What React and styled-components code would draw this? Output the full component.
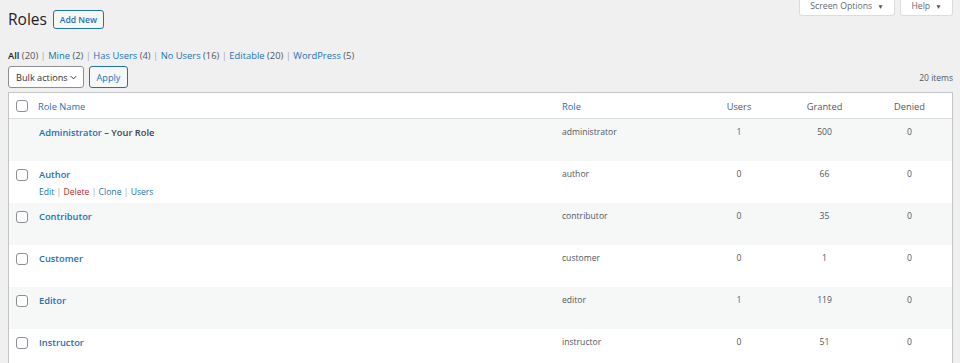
import React from "react";
import styled, { createGlobalStyle } from "styled-components";

const Global = createGlobalStyle`
  html, body { margin: 0; padding: 0; background: #f0f0f1; }
  body { font-family: "Open Sans", "Noto Sans", sans-serif; color: #3c434a; }
  * { box-sizing: border-box; }
`;

const Wrap = styled.div`
  padding: 0 7px 0 8px;
`;

const TopBar = styled.div`
  display: flex;
  justify-content: space-between;
  align-items: flex-start;
`;

const TitleGroup = styled.div`
  display: flex;
  align-items: center;
  gap: 6px;
  padding-top: 10px;
`;

const Title = styled.h1`
  margin: 0;
  font-size: 15.5px;
  font-weight: 400;
  line-height: 19px;
  color: #1d2327;
`;

const OutlineButton = styled.button`
  font-family: inherit;
  font-size: ${(p) => p.$size || 8.6}px;
  font-weight: ${(p) => p.$weight || 400};
  color: #2271b1;
  background: #f6f7f7;
  border: 1px solid #2271b1;
  border-radius: 3px;
  height: ${(p) => p.$h || 19}px;
  width: ${(p) => p.$w}px;
  padding: 0;
  display: flex;
  align-items: center;
  justify-content: center;
  cursor: pointer;
`;

const Tabs = styled.div`
  display: flex;
  gap: 5px;
`;

const Tab = styled.div`
  width: ${(p) => p.$w}px;
  height: 16px;
  background: #fff;
  border: 1px solid #dcdcde;
  border-top: none;
  border-radius: 0 0 3px 3px;
  display: flex;
  align-items: center;
  justify-content: center;
  gap: 5px;
  font-size: 8.7px;
  color: #646970;
  padding-bottom: 3px;
`;

const Caret = styled.span`
  font-size: 6.5px;
  color: #50575e;
`;

const Filters = styled.ul`
  list-style: none;
  margin: 0;
  padding: 0;
  margin-top: 20px;
  display: flex;
  font-size: 9.4px;
  line-height: 13px;
  color: #50575e;
`;

const FilterItem = styled.li`
  white-space: pre;
`;

const FilterLink = styled.a`
  color: ${(p) => (p.$current ? "#1d2327" : "#2271b1")};
  font-weight: ${(p) => (p.$current ? 600 : 400)};
  text-decoration: none;
`;

const Count = styled.span`
  color: #50575e;
`;

const Sep = styled.span`
  color: #a7aaad;
`;

const TableNav = styled.div`
  display: flex;
  justify-content: space-between;
  align-items: center;
  margin-top: 4px;
  height: 22px;
`;

const NavLeft = styled.div`
  display: flex;
  gap: 5px;
  align-items: center;
`;

const Select = styled.div`
  width: 76px;
  height: 22px;
  background: #fff;
  border: 1px solid #8c8f94;
  border-radius: 3px;
  display: flex;
  align-items: center;
  justify-content: space-between;
  padding: 0 5px 0 7px;
  font-size: 9.2px;
  color: #2c3338;
`;

const ItemsCount = styled.div`
  font-size: 8.5px;
  color: #50575e;
`;

const Table = styled.div`
  margin-top: 4px;
  background: #fff;
  border: 1px solid #c3c4c7;
  box-shadow: 0 1px 1px rgba(0, 0, 0, 0.04);
`;

const Row = styled.div`
  display: grid;
  grid-template-columns: 20px 1fr 144px 86px 85px 85px;
  height: ${(p) => (p.$head ? 26 : 42)}px;
  background: ${(p) => (p.$alt ? "#f6f7f7" : "#fff")};
  border-bottom: ${(p) => (p.$head ? "1px solid #dcdcde" : "none")};
`;

const Cell = styled.div`
  padding-top: 7px;
  padding-left: ${(p) => p.$pl || 0}px;
  text-align: ${(p) => (p.$center ? "center" : "left")};
  font-size: ${(p) => (p.$head ? 9.3 : 8.6)}px;
  line-height: 13px;
  color: ${(p) => (p.$link ? "#2271b1" : "#50575e")};
  white-space: nowrap;
`;

const CheckCell = styled.div`
  padding-top: ${(p) => (p.$head ? 7 : 8)}px;
  padding-left: 7px;
`;

const Checkbox = styled.span`
  display: block;
  width: 12px;
  height: 12px;
  border: 1px solid #8c8f94;
  border-radius: 3px;
  background: #fff;
`;

const RowTitle = styled.a`
  font-size: 9.3px;
  font-weight: 600;
  color: #2271b1;
  text-decoration: none;
`;

const Suffix = styled.span`
  font-size: 9.3px;
  font-weight: 600;
  color: #3c434a;
`;

const Actions = styled.div`
  margin-top: 4px;
  font-size: 8.6px;
  line-height: 13px;
  color: #a7aaad;
  white-space: pre;
`;

const ActionLink = styled.a`
  color: ${(p) => (p.$danger ? "#b32d2e" : "#2271b1")};
  text-decoration: none;
`;

const filters = [
  { label: "All", count: 20, current: true },
  { label: "Mine", count: 2 },
  { label: "Has Users", count: 4 },
  { label: "No Users", count: 16 },
  { label: "Editable", count: 20 },
  { label: "WordPress", count: 5 },
];

const rows = [
  { name: "Administrator", suffix: " – Your Role", role: "administrator", users: 1, granted: 500, denied: 0, nocheck: true },
  { name: "Author", role: "author", users: 0, granted: 66, denied: 0, actions: true },
  { name: "Contributor", role: "contributor", users: 0, granted: 35, denied: 0 },
  { name: "Customer", role: "customer", users: 0, granted: 1, denied: 0 },
  { name: "Editor", role: "editor", users: 1, granted: 119, denied: 0 },
  { name: "Instructor", role: "instructor", users: 0, granted: 51, denied: 0 },
];

const Chevron = () => (
  <svg width="9" height="9" viewBox="0 0 20 20">
    <path d="M4 7l6 6 6-6" fill="none" stroke="#2c3338" strokeWidth="2.2" />
  </svg>
);

export default function App() {
  return (
    <>
      <Global />
      <Wrap>
        <TopBar>
          <TitleGroup>
            <Title>Roles</Title>
            <OutlineButton $w={51} $weight={600}>Add New</OutlineButton>
          </TitleGroup>
          <Tabs>
            <Tab $w={96}>
              Screen Options <Caret>▼</Caret>
            </Tab>
            <Tab $w={53}>
              Help <Caret>▼</Caret>
            </Tab>
          </Tabs>
        </TopBar>
        <Filters>
          {filters.map((f, i) => (
            <FilterItem key={f.label}>
              <FilterLink $current={f.current}>{f.label}</FilterLink>
              <Count> ({f.count})</Count>
              {i < filters.length - 1 && <Sep> | </Sep>}
            </FilterItem>
          ))}
        </Filters>
        <TableNav>
          <NavLeft>
            <Select>
              Bulk actions <Chevron />
            </Select>
            <OutlineButton $w={39} $h={22} $size={9.2}>Apply</OutlineButton>
          </NavLeft>
          <ItemsCount>20 items</ItemsCount>
        </TableNav>
        <Table>
          <Row $head>
            <CheckCell $head>
              <Checkbox />
            </CheckCell>
            <Cell $head $link $pl={9}>Role Name</Cell>
            <Cell $head $link $pl={10}>Role</Cell>
            <Cell $head $center>Users</Cell>
            <Cell $head $center>Granted</Cell>
            <Cell $head $center>Denied</Cell>
          </Row>
          {rows.map((r, i) => (
            <Row key={r.role} $alt={i % 2 === 0}>
              <CheckCell>{!r.nocheck && <Checkbox />}</CheckCell>
              <Cell $pl={10}>
                <RowTitle>{r.name}</RowTitle>
                {r.suffix && <Suffix>{r.suffix}</Suffix>}
                {r.actions && (
                  <Actions>
                    <ActionLink>Edit</ActionLink> | <ActionLink $danger>Delete</ActionLink> | <ActionLink>Clone</ActionLink> | <ActionLink>Users</ActionLink>
                  </Actions>
                )}
              </Cell>
              <Cell $pl={10}>{r.role}</Cell>
              <Cell $center $link={r.users > 0}>{r.users}</Cell>
              <Cell $center>{r.granted}</Cell>
              <Cell $center>{r.denied}</Cell>
            </Row>
          ))}
        </Table>
      </Wrap>
    </>
  );
}
